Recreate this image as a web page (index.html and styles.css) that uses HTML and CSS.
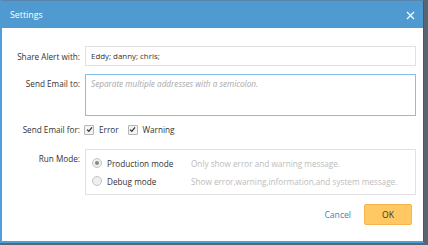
FILE: index.html
```html
<!DOCTYPE html>
<html lang="en">
<head>
  <meta charset="UTF-8" />
  <title>Settings</title>
  <link rel="stylesheet" href="styles.css">
</head>
<body>

  <div class="dialog">
    <div class="dialog-header">
      <span class="title">Settings</span>
      <span class="close">
        <svg width="9" height="9" viewBox="0 0 9 9"><path d="M1 1L8 8M8 1L1 8" stroke="#fff" stroke-width="1.2"/></svg>
      </span>
    </div>

    <div class="dialog-body">
      <div class="row">
        <label class="label">Share Alert with:</label>
        <div class="field input">Eddy; danny; chris;</div>
      </div>

      <div class="row">
        <label class="label">Send Email to:</label>
        <div class="field textarea"><span class="placeholder">Separate multiple addresses with a semicolon.</span></div>
      </div>

      <div class="row row-checks">
        <label class="label">Send Email for:</label>
        <div class="checks">
          <span class="check"><span class="box"><svg width="7" height="7" viewBox="0 0 7 7"><path d="M1 3.6L2.8 5.3L6 1.3" fill="none" stroke="#333" stroke-width="1.3"/></svg></span>Error</span>
          <span class="check"><span class="box"><svg width="7" height="7" viewBox="0 0 7 7"><path d="M1 3.6L2.8 5.3L6 1.3" fill="none" stroke="#333" stroke-width="1.3"/></svg></span>Warning</span>
        </div>
      </div>

      <div class="row row-mode">
        <label class="label">Run Mode:</label>
        <div class="field modes">
          <div class="mode">
            <span class="radio checked"></span>
            <span class="mode-name">Production mode</span>
            <span class="mode-hint">Only show error and warning message.</span>
          </div>
          <div class="mode">
            <span class="radio"></span>
            <span class="mode-name">Debug mode</span>
            <span class="mode-hint">Show error,warning,information,and system message.</span>
          </div>
        </div>
      </div>
    </div>

    <div class="dialog-footer">
      <span class="cancel">Cancel</span>
      <button class="ok">OK</button>
    </div>
  </div>

</body>
</html>
```

FILE: styles.css
```css
body {
  margin: 0;
  background: #5b6570;
  font-family: "Open Sans", Arial, sans-serif;
  font-size: 8.2px;
  color: #333;
}

.dialog {
  width: 421px;
  height: 240px;
  background: #fff;
  border-left: 2px solid #4d9fdc;
  border-bottom: 2px solid #4d9fdc;
  border-right: 1px solid #2f5f86;
  border-top: 1px solid #5a85aa;
  display: flex;
  flex-direction: column;
}

.dialog-header {
  height: 27px;
  background: #4f9bd1;
  display: flex;
  align-items: center;
  justify-content: space-between;
  padding: 0 8px 0 10px;
  margin-left: -2px;
}

.title {
  color: #fff;
  font-size: 8.8px;
}

.close {
  display: flex;
  padding-top: 1px;
}

.dialog-body {
  padding: 18px 7px 0 0;
  flex: 1;
}

.row {
  display: flex;
  align-items: center;
  margin-bottom: 8px;
}

.label {
  width: 78px;
  margin-right: 5px;
  text-align: right;
  flex-shrink: 0;
  white-space: nowrap;
}

.field {
  flex: 1;
  box-sizing: border-box;
}

.input {
  height: 20px;
  border: 1px solid #e2e2e2;
  padding: 0 5px;
  display: flex;
  align-items: center;
  font-size: 7.9px;
}

.row:nth-child(2) {
  align-items: flex-start;
}

.row:nth-child(2) .label {
  padding-top: 4px;
}

.textarea {
  height: 42px;
  border: 1px solid #85c0e8;
  padding: 3px 5px;
}

.placeholder {
  color: #a9a9a9;
  font-style: italic;
  font-size: 8.2px;
}

.row-checks {
  margin-bottom: 14px;
}

.checks {
  display: flex;
  gap: 9px;
  margin-left: -1px;
}

.check {
  display: flex;
  align-items: center;
  gap: 5px;
}

.box {
  width: 8px;
  height: 8px;
  border: 1px solid #b5b5b5;
  border-radius: 1px;
  background: #f4f4f4;
  display: flex;
  align-items: center;
  justify-content: center;
}

.row-mode {
  align-items: flex-start;
}

.row-mode .label {
  padding-top: 4px;
}

.modes {
  border: 1px solid #e2e2e2;
  height: 46px;
  padding: 4px 6px;
  display: flex;
  flex-direction: column;
  justify-content: space-around;
}

.mode {
  display: flex;
  align-items: center;
  white-space: nowrap;
}

.radio {
  width: 8px;
  height: 8px;
  border: 1px solid #c4c4c4;
  border-radius: 50%;
  background: #efefef;
  margin-right: 5px;
  display: flex;
  align-items: center;
  justify-content: center;
}

.radio.checked::after {
  content: "";
  width: 4px;
  height: 4px;
  border-radius: 50%;
  background: #8a8a8a;
}

.mode-name {
  width: 84px;
}

.mode-hint {
  color: #bcbcbc;
  font-size: 8.2px;
}

.dialog-footer {
  display: flex;
  justify-content: flex-end;
  align-items: center;
  gap: 13px;
  padding: 0 11px 16px 0;
}

.cancel {
  color: #3f7fb6;
  font-size: 8.6px;
}

.ok {
  width: 48px;
  height: 21px;
  background: #ffc862;
  border: 1px solid #f4b54c;
  border-radius: 2px;
  font-family: "Open Sans", Arial, sans-serif;
  font-size: 8.6px;
  color: #333;
  padding: 0;
}
```
